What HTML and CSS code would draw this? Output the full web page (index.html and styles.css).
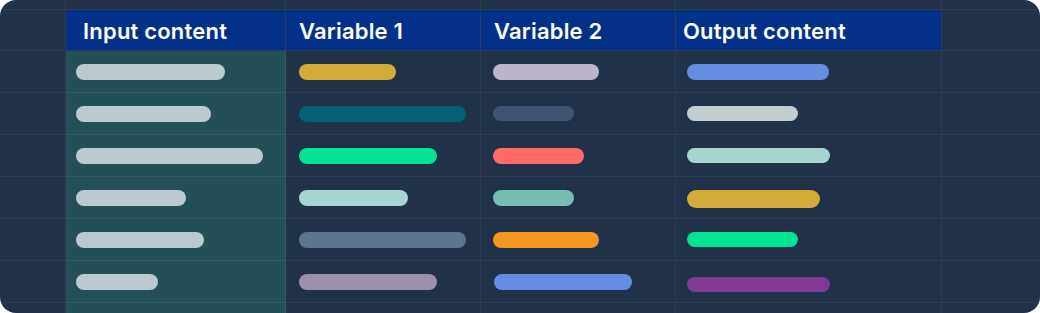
FILE: index.html
```html
<!DOCTYPE html>
<html lang="en">
<head>
<meta charset="utf-8">
<title>Content table</title>
<link rel="stylesheet" href="styles.css">
</head>
<body>
<div class="card">
  <div class="row row-top">
    <div class="cell c0"></div><div class="cell c1"></div><div class="cell c2"></div><div class="cell c3"></div><div class="cell c4"></div><div class="cell c5"></div>
  </div>
  <div class="row row-head">
    <div class="cell c0"></div>
    <div class="cell c1 head">Input content</div>
    <div class="cell c2 head">Variable 1</div>
    <div class="cell c3 head">Variable 2</div>
    <div class="cell c4 head">Output content</div>
    <div class="cell c5"></div>
  </div>
  <div class="row">
    <div class="cell c0"></div>
    <div class="cell c1 input"><span class="bar silver" style="width:149px"></span></div>
    <div class="cell c2"><span class="bar yellow" style="width:97px"></span></div>
    <div class="cell c3"><span class="bar lavender" style="width:106px"></span></div>
    <div class="cell c4"><span class="bar blue" style="width:142px"></span></div>
    <div class="cell c5"></div>
  </div>
  <div class="row">
    <div class="cell c0"></div>
    <div class="cell c1 input"><span class="bar silver" style="width:135px"></span></div>
    <div class="cell c2"><span class="bar petrol" style="width:167px"></span></div>
    <div class="cell c3"><span class="bar slate-dark thin" style="width:81px"></span></div>
    <div class="cell c4"><span class="bar silver-2 thin" style="width:111px"></span></div>
    <div class="cell c5"></div>
  </div>
  <div class="row">
    <div class="cell c0"></div>
    <div class="cell c1 input"><span class="bar silver" style="width:187px"></span></div>
    <div class="cell c2"><span class="bar green" style="width:138px"></span></div>
    <div class="cell c3"><span class="bar red" style="width:91px"></span></div>
    <div class="cell c4"><span class="bar mint thin" style="width:143px"></span></div>
    <div class="cell c5"></div>
  </div>
  <div class="row">
    <div class="cell c0"></div>
    <div class="cell c1 input"><span class="bar silver" style="width:110px"></span></div>
    <div class="cell c2"><span class="bar mint" style="width:109px"></span></div>
    <div class="cell c3"><span class="bar teal" style="width:81px"></span></div>
    <div class="cell c4"><span class="bar yellow thick" style="width:133px"></span></div>
    <div class="cell c5"></div>
  </div>
  <div class="row">
    <div class="cell c0"></div>
    <div class="cell c1 input"><span class="bar silver" style="width:128px"></span></div>
    <div class="cell c2"><span class="bar slate" style="width:167px"></span></div>
    <div class="cell c3"><span class="bar orange" style="width:106px"></span></div>
    <div class="cell c4"><span class="bar green thin" style="width:111px"></span></div>
    <div class="cell c5"></div>
  </div>
  <div class="row">
    <div class="cell c0"></div>
    <div class="cell c1 input"><span class="bar silver" style="width:82px"></span></div>
    <div class="cell c2"><span class="bar mauve" style="width:138px"></span></div>
    <div class="cell c3"><span class="bar blue shift" style="width:138px"></span></div>
    <div class="cell c4"><span class="bar purple thin low" style="width:143px"></span></div>
    <div class="cell c5"></div>
  </div>
  <div class="row row-end">
    <div class="cell c0"></div>
    <div class="cell c1 input"></div>
    <div class="cell c2"></div>
    <div class="cell c3"></div>
    <div class="cell c4"></div>
    <div class="cell c5"></div>
  </div>
</div>
</body>
</html>
```

FILE: styles.css
```css
* {
  box-sizing: border-box;
}

html, body {
  margin: 0;
  padding: 0;
  background: #ffffff;
}

body {
  font-family: Inter, "Liberation Sans", sans-serif;
}

.card {
  width: 1040px;
  height: 313px;
  background: #213147;
  border-radius: 16px;
  overflow: hidden;
  display: flex;
  flex-direction: column;
}

.row {
  display: grid;
  grid-template-columns: 66px 220px 195px 195px 266px 1fr;
  height: 42px;
  flex: none;
}

.row-top {
  height: 10px;
}

.row-head {
  height: 41px;
}

.row-end {
  height: 11px;
}

.cell {
  border-right: 1px solid #2b3c53;
  border-bottom: 1px solid #2b3c53;
  display: flex;
  align-items: center;
  min-width: 0;
}

.c5 {
  border-right: none;
}

.row-end .cell {
  border-bottom: none;
}

.head {
  background: #033189;
  color: #ffffff;
  font-size: 22px;
  font-weight: 600;
  letter-spacing: 0.2px;
  white-space: nowrap;
  padding-top: 1px;
}

.c1.head { padding-left: 17px; }
.c2.head { padding-left: 13px; }
.c3.head { padding-left: 13px; }
.c4.head { padding-left: 7px; }

.input {
  background: #234f57;
  border-right-color: #2e5c63;
  border-bottom-color: #2e5c63;
}

.c1.input { padding-left: 10px; }
.row .c2:not(.head) { padding-left: 13px; }
.row .c3:not(.head) { padding-left: 12px; }
.row .c4:not(.head) { padding-left: 11px; }

.bar {
  display: block;
  height: 16px;
  border-radius: 8px;
}

.bar.thin {
  height: 15px;
}

.bar.thick {
  height: 18px;
  border-radius: 9px;
  margin-top: 3px;
}

.bar.low {
  margin-top: 5px;
}

.bar.shift {
  margin-left: 1px;
}

.silver { background: #bcc9ce; }
.silver-2 { background: #c2cdd0; }
.yellow { background: #d4aa3b; }
.lavender { background: #bdb6cb; }
.blue { background: #668de4; }
.petrol { background: #036174; }
.slate-dark { background: #405470; }
.green { background: #00e592; }
.red { background: #ff6b6b; }
.mint { background: #a7d6d1; }
.teal { background: #76beb2; }
.slate { background: #5f758d; }
.orange { background: #f7971f; }
.mauve { background: #9e90a8; }
.purple { background: #7f3a96; }
```
